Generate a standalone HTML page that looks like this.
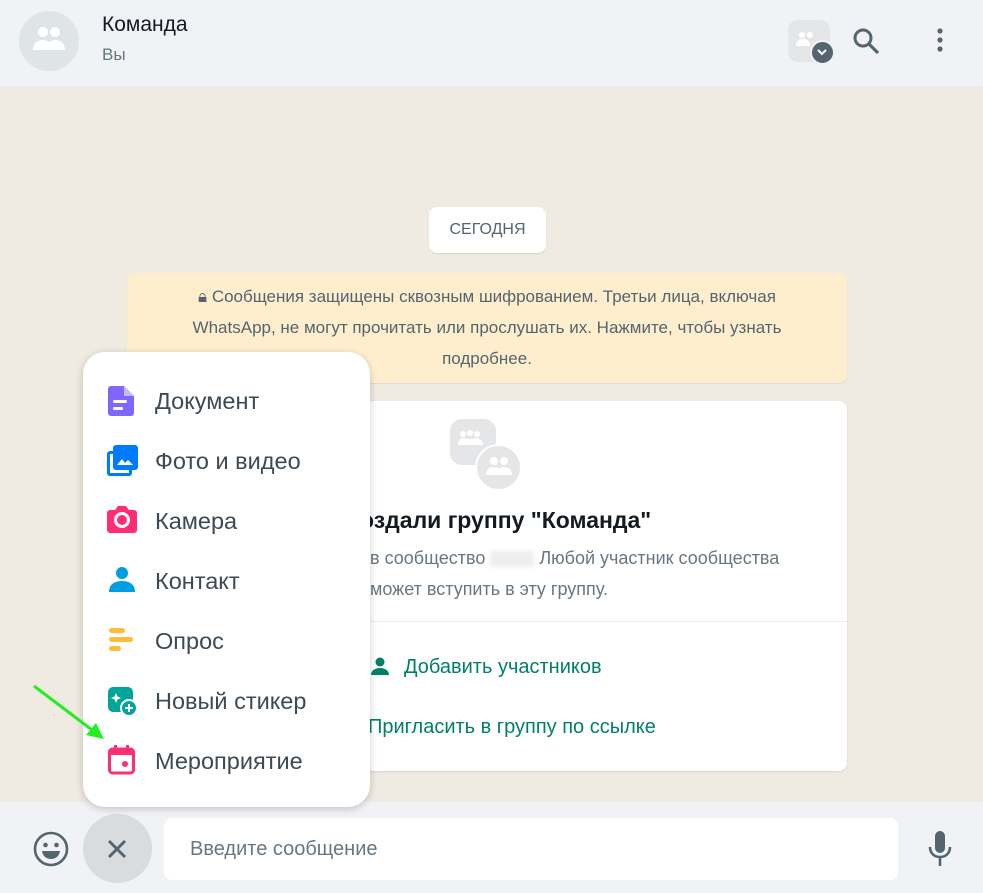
<!DOCTYPE html>
<html><head><meta charset="utf-8"><style>
*{margin:0;padding:0;box-sizing:border-box}
body{width:983px;height:893px;overflow:hidden;font-family:"Liberation Sans","Noto Sans CJK SC",sans-serif;background:#efeae2;position:relative}
.abs{position:absolute}
</style></head><body>
<div class="abs" style="left:0;top:0;width:983px;height:86px;background:#f0f2f5"></div>
<div class="abs" style="left:19px;top:11px;width:60px;height:60px;border-radius:50%;background:#dfe5e7"></div>
<svg class="abs" style="left:31px;top:24px" width="36" height="30" viewBox="0 0 36 30"><circle cx="12" cy="8" r="5" fill="#fff"/><circle cx="24" cy="8" r="5" fill="#fff"/><path d="M2 26c0-7 5-10 10-10s10 3 10 10z" fill="#fff"/><path d="M16 26c1-7 4-10 8-10 5 0 10 3 10 10z" fill="#fff"/></svg>
<div class="abs" style="left:102px;top:13px;font-size:21px;color:#111b21">Команда</div>
<div class="abs" style="left:102px;top:45px;font-size:17px;color:#667781">Вы</div>
<div class="abs" style="left:788px;top:20px;width:42px;height:42px;border-radius:10px;background:#e4e6e8"></div>
<svg class="abs" style="left:795px;top:30px" width="24" height="20"><circle cx="7" cy="5" r="3" fill="#fff"/><circle cx="15" cy="5" r="3" fill="#fff"/><path d="M1 16c0-5 3-7 7-7s7 2 7 7z" fill="#fff"/></svg>
<div class="abs" style="left:810px;top:40px;width:25px;height:25px;border-radius:50%;background:#54656f;border:2px solid #f0f2f5"></div>
<svg class="abs" style="left:815px;top:46px" width="14" height="12"><path d="M3 4l4 4 4-4" stroke="#fff" stroke-width="2" fill="none"/></svg>
<svg class="abs" style="left:851px;top:26px" width="30" height="30"><circle cx="12" cy="12" r="8" stroke="#54656f" stroke-width="3" fill="none"/><path d="M18 18l9 9" stroke="#54656f" stroke-width="3.2"/></svg>
<svg class="abs" style="left:934px;top:27px" width="12" height="28"><circle cx="6" cy="4" r="2.6" fill="#54656f"/><circle cx="6" cy="13" r="2.6" fill="#54656f"/><circle cx="6" cy="22" r="2.6" fill="#54656f"/></svg>

<div class="abs" style="left:429px;top:207px;width:117px;height:46px;background:#fff;border-radius:8px;box-shadow:0 1px 1px rgba(0,0,0,.1);font-size:16px;color:#54656f;text-align:center;line-height:46px">СЕГОДНЯ</div>
<div class="abs" style="left:127px;top:273px;width:720px;height:110px;background:#ffeecd;border-radius:8px;box-shadow:0 1px 1px rgba(0,0,0,.08);font-size:17px;color:#54656f;text-align:center;line-height:31px;padding:8px 36px">🔒︎ Сообщения защищены сквозным шифрованием. Третьи лица, включая WhatsApp, не могут прочитать или прослушать их. Нажмите, чтобы узнать подробнее.</div>

<div class="abs" style="left:360px;top:401px;width:487px;height:370px;background:#fff;border-radius:8px;box-shadow:0 1px 2px rgba(0,0,0,.1)"></div>
<div class="abs" style="left:450px;top:419px;width:46px;height:46px;border-radius:12px;background:#e4e6e8"></div>
<svg class="abs" style="left:457px;top:428px" width="28" height="24"><circle cx="6" cy="6" r="3" fill="#fff"/><circle cx="13" cy="5" r="3" fill="#fff"/><circle cx="20" cy="6" r="3" fill="#fff"/><path d="M1 17c0-5 3-7 5-7s5 1 7 1 5-1 7-1 6 2 6 7z" fill="#fff"/></svg>
<div class="abs" style="left:475px;top:444px;width:47px;height:47px;border-radius:50%;background:#e4e6e8;border:2px solid #fff"></div>
<svg class="abs" style="left:485px;top:455px" width="28" height="24"><circle cx="9" cy="6" r="4" fill="#fff"/><circle cx="19" cy="6" r="4" fill="#fff"/><path d="M1 20c0-6 4-8 8-8s8 2 8 8z M12 20c1-6 3-8 7-8s8 2 8 8z" fill="#fff"/></svg>
<div class="abs" style="left:360px;top:507px;font-size:23px;font-weight:bold;color:#111b21;white-space:nowrap">оздали группу "Команда"</div>
<div class="abs" style="left:370px;top:548px;font-size:18px;color:#667781;white-space:nowrap">в сообщество <span style="display:inline-block;width:44px;height:16px;background:#eceeef;vertical-align:middle;filter:blur(2px)"></span> Любой участник сообщества</div>
<div class="abs" style="left:370px;top:579px;font-size:18px;color:#667781">может вступить в эту группу.</div>
<div class="abs" style="left:370px;top:621px;width:477px;height:1px;background:#e9edef"></div>
<svg class="abs" style="left:368px;top:656px" width="24" height="20"><circle cx="12" cy="6" r="4.5" fill="#008069"/><path d="M3 19c0-5 5-7 9-7s9 2 9 7z" fill="#008069"/></svg>
<div class="abs" style="left:404px;top:656px;font-size:20px;color:#008069">Добавить участников</div>
<div class="abs" style="left:368px;top:716px;font-size:20px;color:#008069">Пригласить в группу по ссылке</div>

<div class="abs" style="left:0;top:802px;width:983px;height:91px;background:#f0f2f5"></div>
<svg class="abs" style="left:33px;top:831px" width="36" height="36"><circle cx="18" cy="18" r="16" stroke="#54656f" stroke-width="2.6" fill="none"/><circle cx="12.5" cy="14" r="2.3" fill="#54656f"/><circle cx="23.5" cy="14" r="2.3" fill="#54656f"/><path d="M9 20h18c-1 6-5 8-9 8s-8-2-9-8z" fill="#54656f"/></svg>
<div class="abs" style="left:83px;top:814px;width:69px;height:69px;border-radius:50%;background:#d9dbdf"></div>
<svg class="abs" style="left:105px;top:837px" width="24" height="24"><path d="M4 4l16 16M20 4L4 20" stroke="#54656f" stroke-width="3"/></svg>
<div class="abs" style="left:164px;top:818px;width:734px;height:62px;background:#fff;border-radius:8px;font-size:20px;color:#667781;line-height:62px;padding-left:26px">Введите сообщение</div>
<svg class="abs" style="left:926px;top:831px" width="28" height="36"><rect x="9" y="0" width="10" height="22" rx="5" fill="#54656f"/><path d="M4 16c0 6 4 10 10 10s10-4 10-10" stroke="#54656f" stroke-width="2.6" fill="none"/><path d="M14 26v9" stroke="#54656f" stroke-width="2.6"/></svg>

<div class="abs" style="left:83px;top:352px;width:287px;height:455px;background:#fff;border-radius:22px;box-shadow:0 2px 8px rgba(0,0,0,.2)"></div>
<div class="abs" style="left:155px;top:388px;font-size:23.5px;color:#3b4a54;line-height:26px">
<div style="height:60px">Документ</div><div style="height:60px">Фото и видео</div><div style="height:60px">Камера</div><div style="height:60px">Контакт</div><div style="height:60px">Опрос</div><div style="height:60px">Новый стикер</div><div style="height:60px">Мероприятие</div></div>
<svg class="abs" style="left:108px;top:386px" width="26" height="30"><path d="M0 3a3 3 0 0 1 3-3h13l10 10v17a3 3 0 0 1-3 3H3a3 3 0 0 1-3-3z" fill="#7f66ff"/><path d="M16 0v10h10z" fill="#c5b8ff"/><rect x="5" y="14" width="14" height="3" rx="1.5" fill="#fff"/><rect x="5" y="21" width="10" height="3" rx="1.5" fill="#fff"/></svg>
<svg class="abs" style="left:107px;top:445px" width="31" height="31"><rect x="0" y="6" width="25" height="25" rx="3" fill="#007bfc"/><rect x="3" y="9" width="19" height="19" fill="#fff"/><rect x="6" y="0" width="25" height="25" rx="3" fill="#007bfc"/><path d="M10 20l5-6 3 4 3-3 5 5z" fill="#fff"/></svg>
<svg class="abs" style="left:107px;top:505px" width="30" height="28"><path d="M0 8a3 3 0 0 1 3-3h5l3-4h8l3 4h5a3 3 0 0 1 3 3v17a3 3 0 0 1-3 3H3a3 3 0 0 1-3-3z" fill="#ff2e74"/><circle cx="15" cy="15" r="6.5" stroke="#fff" stroke-width="3" fill="none"/></svg>
<svg class="abs" style="left:109px;top:566px" width="26" height="26"><circle cx="13" cy="7" r="6" fill="#009de2"/><path d="M0 26c0-8 6-11 13-11s13 3 13 11z" fill="#009de2"/></svg>
<svg class="abs" style="left:109px;top:628px" width="26" height="26"><rect x="0" y="0" width="16" height="5" rx="2.5" fill="#ffbc38"/><rect x="0" y="9" width="24" height="5" rx="2.5" fill="#ffbc38"/><rect x="0" y="18" width="12" height="5" rx="2.5" fill="#ffbc38"/></svg>
<svg class="abs" style="left:108px;top:687px" width="30" height="30"><rect x="0" y="0" width="25" height="25" rx="5" fill="#02a698"/><path d="M8 6l1.5 3.5L13 11l-3.5 1.5L8 16l-1.5-3.5L3 11l3.5-1.5z" fill="#fff"/><circle cx="21" cy="21" r="8" fill="#02a698" stroke="#fff" stroke-width="2"/><path d="M21 17v8M17 21h8" stroke="#fff" stroke-width="2"/></svg>
<svg class="abs" style="left:108px;top:745px" width="27" height="30"><rect x="1.5" y="4" width="24" height="24" rx="3" stroke="#ff2e74" stroke-width="3" fill="none"/><rect x="1.5" y="4" width="24" height="6" fill="#ff2e74"/><rect x="6" y="0" width="3" height="6" fill="#ff2e74"/><rect x="18" y="0" width="3" height="6" fill="#ff2e74"/><circle cx="17" cy="19" r="3" fill="#ff2e74"/></svg>
<svg class="abs" style="left:30px;top:682px" width="80" height="62"><path d="M4 4L70 54" stroke="#22ee22" stroke-width="3"/><path d="M74 57L56 53L66 41z" fill="#22ee22"/></svg>
</body></html>
